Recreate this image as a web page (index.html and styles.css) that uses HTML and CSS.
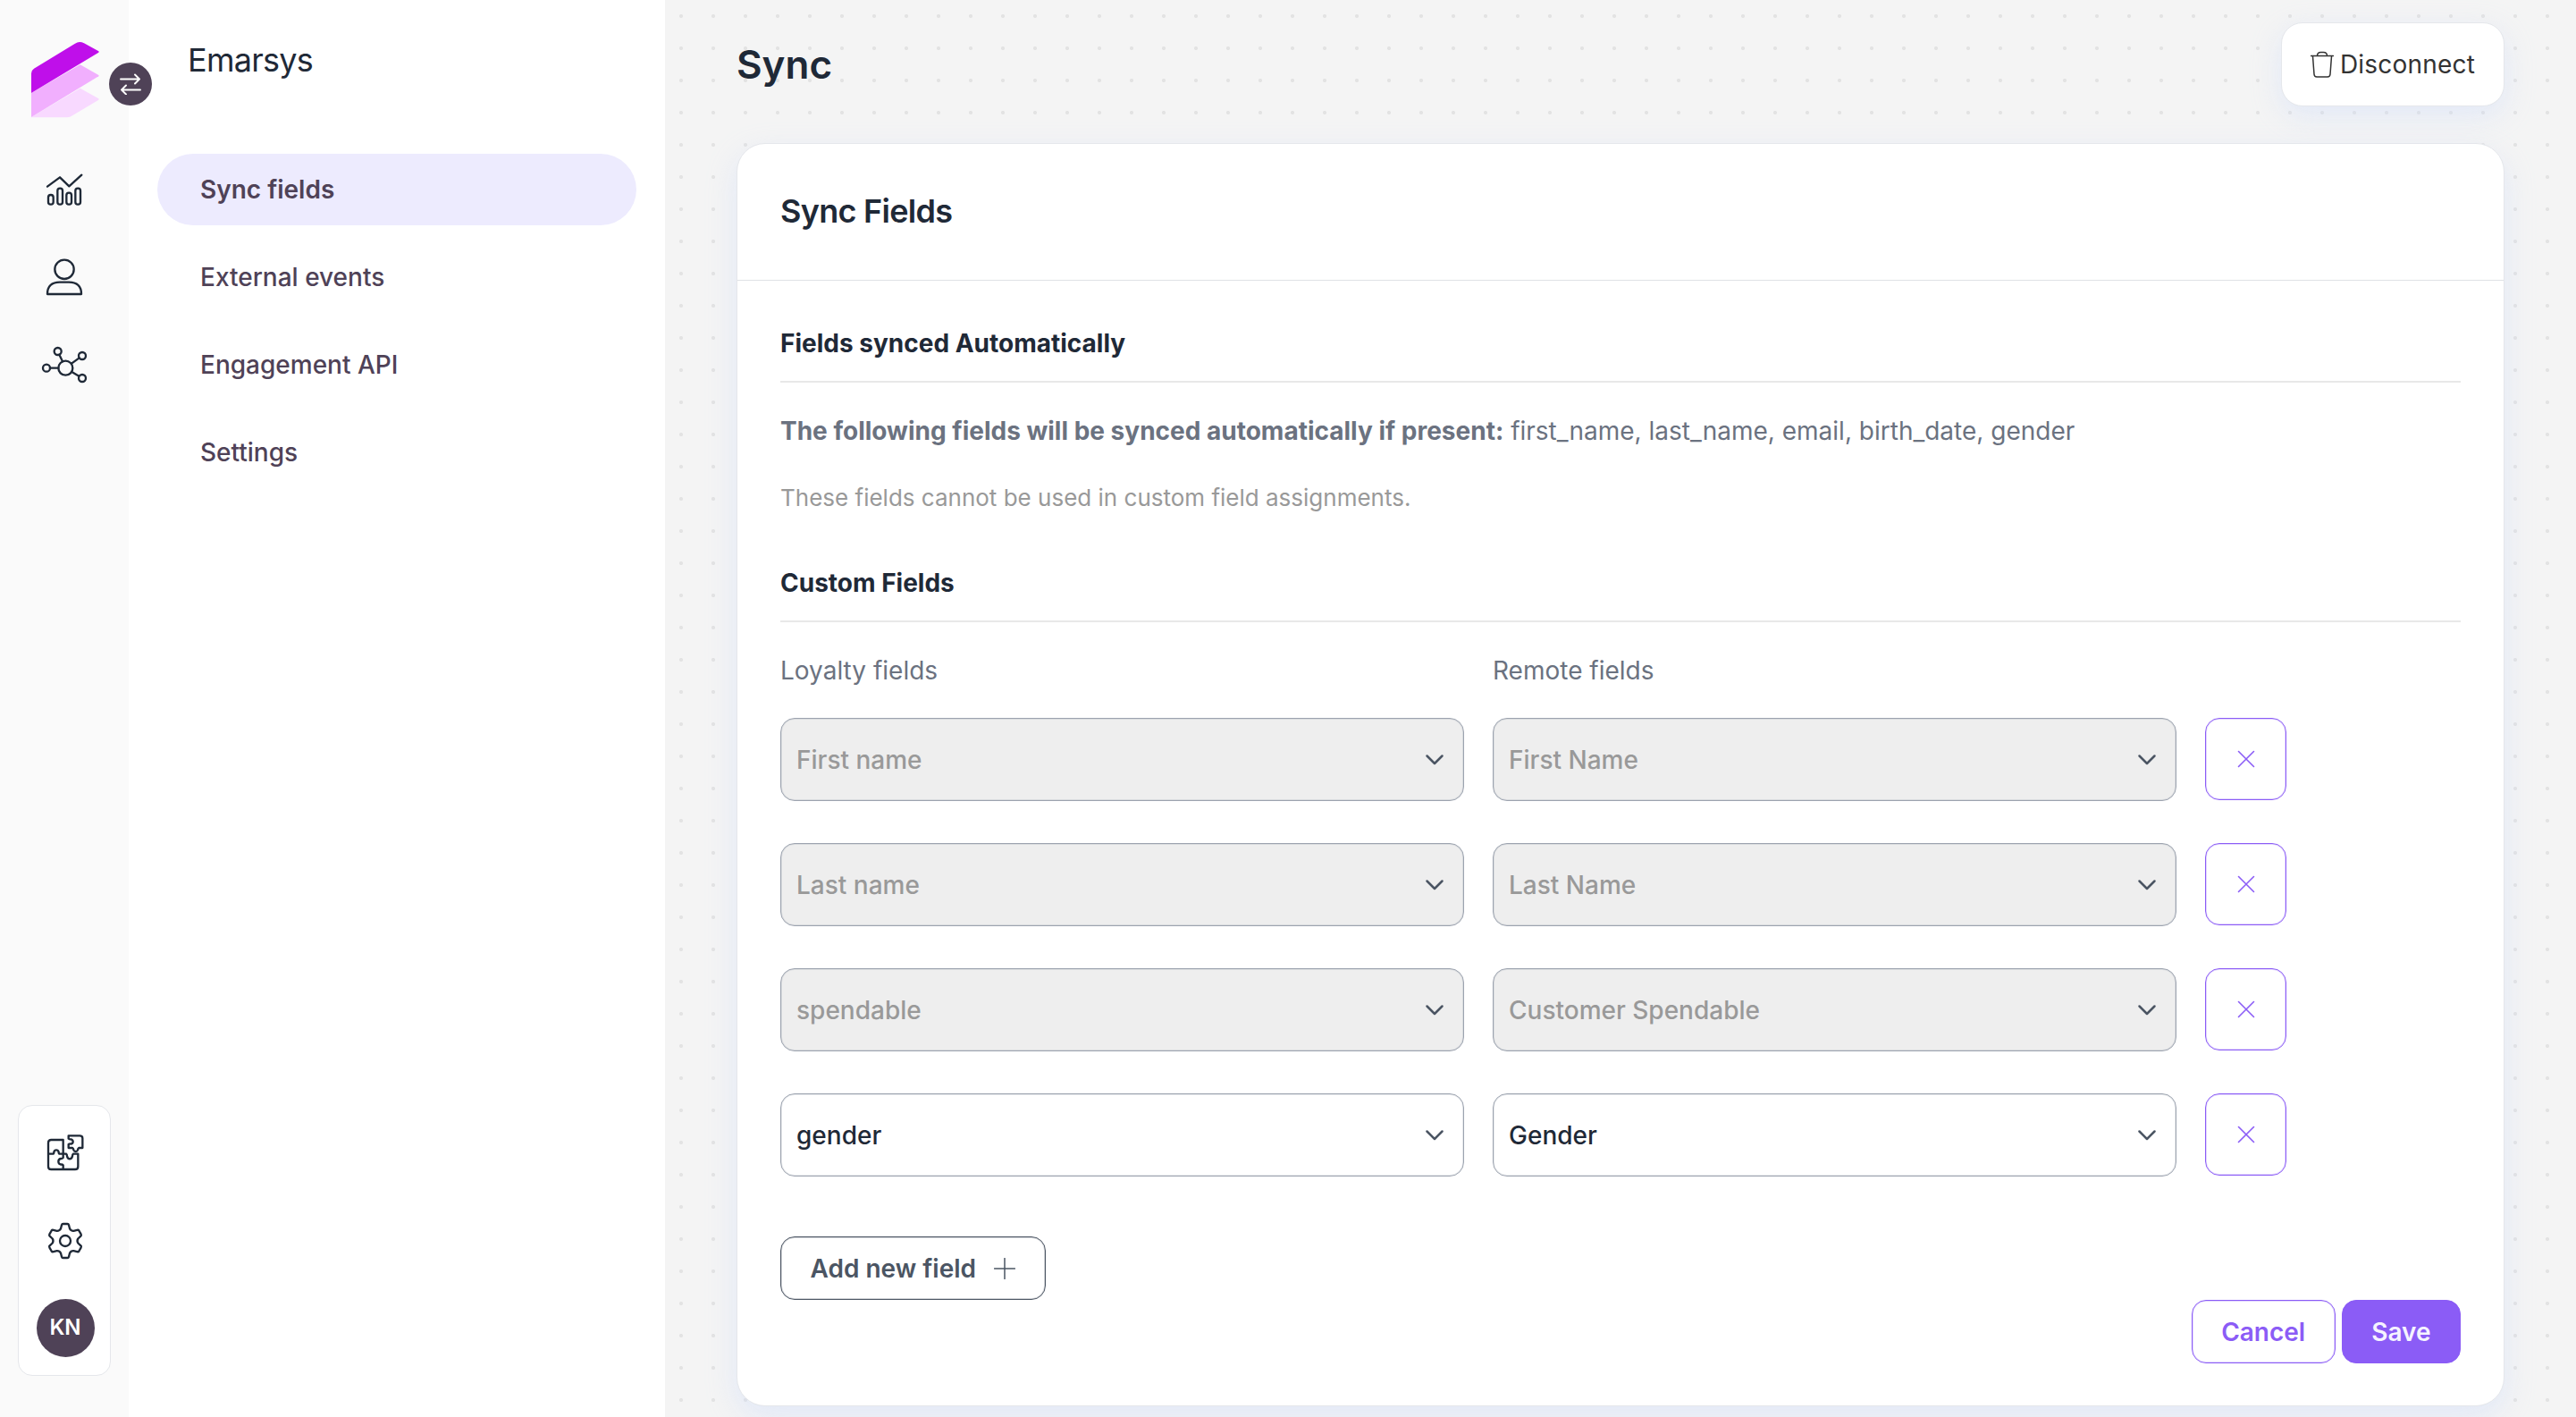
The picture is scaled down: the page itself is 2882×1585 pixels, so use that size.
FILE: index.html
```html
<!DOCTYPE html>
<html lang="en">
  <head>
    <meta charset="UTF-8" />
    <meta name="viewport" content="width=device-width, initial-scale=1.0" />
    <title>Emarsys - Sync</title>
    <link rel="stylesheet" href="styles.css">
  </head>

  <body>
    <svg class="sprite" aria-hidden="true">
      <symbol id="chevron" viewBox="0 0 24 24"><path d="M3.5 7.5 12 16l8.500-8.500" /></symbol>
      <symbol id="cross" viewBox="0 0 20 20"><path d="M1.500 1.500l17 17M18.500 1.500l-17 17" /></symbol>
    </svg>

    <div class="layout">
      <aside class="rail">
        <div class="brand">
          <svg class="logo" viewBox="105 138 228 258">
            <path fill="#f8d9ff" d="M269 296l62 35q2 2 0 4l-88 53q-8 6-17 6H105V393z" />
            <path fill="#f1affe" d="M269 217l62 35q2 2 0 4L105 393V312z" />
            <path fill="#bf0fea" d="M105 312V246q0-10 9-16L252 146q14-10 30-1l49 27q2 2 0 4z" />
          </svg>
          <button class="switch">
            <svg viewBox="0 0 24 24"><path d="M1 6.500h21M17 1.500l5 5-5 5M23 18.500H2M7 13.500l-5 5 5 5" /></svg>
          </button>
        </div>

        <nav class="rail-nav">
          <svg class="icon" viewBox="144 564 144 144">
            <path d="M159 626l42-31 31 30 42-38" />
            <rect x="162" y="654" width="17" height="32" rx="8" />
            <rect x="193" y="632" width="17" height="54" rx="8" />
            <rect x="223" y="647" width="17" height="39" rx="8" />
            <rect x="253" y="632" width="17" height="54" rx="8" />
          </svg>
          <svg class="icon" viewBox="144 855 144 144">
            <circle cx="216" cy="904" r="32" />
            <path d="M159 987q0-40 42-40h30q42 0 42 40z" />
          </svg>
          <svg class="icon big" viewBox="138 1146 156 156">
            <circle cx="220" cy="1235" r="24" />
            <circle cx="194" cy="1179" r="12" />
            <circle cx="276" cy="1194" r="12" />
            <circle cx="156" cy="1235" r="12" />
            <circle cx="276" cy="1269" r="12" />
            <path d="M199 1190l11 23M266 1201l-25 18M168 1235h28M265 1262l-24-14" />
          </svg>
        </nav>

        <div class="rail-bottom">
          <svg class="icon" viewBox="148 165 144 144">
            <path d="M213 293V280q-4-4-8-2-8-2-8-10t8-10q4 1 8-3V195H173q-10 0-10 10V284q0 10 10 10H253q10 0 10-10V242H247q-3 3-3 8-2 9-9 9t-9-9q0-5-3-8H200q-3-3-2-6-2-7-8-7t-8 7q1 3-2 6H163" />
            <path d="M231 181h38q9 0 9 9v32H266q-4 3-4 7-2 5-7 5t-7-5q0-4-4-7H231v-12q4-3 8-1 7-2 7-8t-7-8q-4 1-8-2z" />
          </svg>
          <svg class="icon" viewBox="-72 -72 144 144">
            <circle r="18" />
            <path d="M-15-41L-12-53q1-4 5-4H7q4 0 5 4L15-41Q19-33 28-33.500L40-36.500q4-1 6 2L53-22q2 4-1 6L43-7.500Q38 0 43 7.500L52 16q3 2 1 6L46 34.500q-2 3-6 2L28 33.500Q19 33 15 41L12 53q-1 4-5 4H-7q-4 0-5-4L-15 41Q-19 33-28 33.500L-40 36.500q-4 1-6-2L-53 22q-2-4 1-6L-43 7.500Q-38 0-43-7.500L-52-16q-3-2-1-6L-46-34.500q2-3 6-2L-28-33.500Q-19-33-15-41z" />
          </svg>
          <div class="avatar">KN</div>
        </div>
      </aside>

      <aside class="menu">
        <h2>Emarsys</h2>
        <ul>
          <li class="active">Sync fields</li>
          <li>External events</li>
          <li>Engagement API</li>
          <li>Settings</li>
        </ul>
      </aside>

      <main>
        <header>
          <h1>Sync</h1>
          <button class="disconnect">
            <svg viewBox="0 0 26 30"><path d="M.500 5.500h25M7.500 5.500q0-4 4-4h3q4 0 4 4M2.500 6l1.500 20q.200 3 3 3h12q2.800 0 3-3l1.500-20" /></svg>
            Disconnect
          </button>
        </header>

        <section class="card">
          <div class="card-head"><h2>Sync Fields</h2></div>
          <div class="card-body">
            <h3>Fields synced Automatically</h3>
            <p class="synced"><b>The following fields will be synced automatically if present:</b> first_name, last_name, email, birth_date, gender</p>
            <p class="note">These fields cannot be used in custom field assignments.</p>

            <h3>Custom Fields</h3>
            <div class="row labels">
              <span>Loyalty fields</span>
              <span>Remote fields</span>
            </div>
            <div class="row">
              <div class="select disabled">First name<svg><use href="#chevron" /></svg></div>
              <div class="select disabled">First Name<svg><use href="#chevron" /></svg></div>
              <button class="remove"><svg><use href="#cross" /></svg></button>
            </div>
            <div class="row">
              <div class="select disabled">Last name<svg><use href="#chevron" /></svg></div>
              <div class="select disabled">Last Name<svg><use href="#chevron" /></svg></div>
              <button class="remove"><svg><use href="#cross" /></svg></button>
            </div>
            <div class="row">
              <div class="select disabled">spendable<svg><use href="#chevron" /></svg></div>
              <div class="select disabled">Customer Spendable<svg><use href="#chevron" /></svg></div>
              <button class="remove"><svg><use href="#cross" /></svg></button>
            </div>
            <div class="row">
              <div class="select">gender<svg><use href="#chevron" /></svg></div>
              <div class="select">Gender<svg><use href="#chevron" /></svg></div>
              <button class="remove"><svg><use href="#cross" /></svg></button>
            </div>

            <button class="btn add">Add new field
              <svg viewBox="0 0 24 24"><path d="M12 .500v23M.500 12h23" /></svg>
            </button>
            <div class="actions">
              <button class="btn cancel">Cancel</button>
              <button class="btn save">Save</button>
            </div>
          </div>
        </section>
      </main>
    </div>
  </body>
</html>
```
FILE: styles.css
```css
* {
  box-sizing: border-box;
  margin: 0;
  padding: 0;
}

body {
  font-family: Inter, "Liberation Sans", sans-serif;
  font-size: 28px;
  line-height: 42px;
  color: #1f2937;
}

button {
  font: inherit;
  background: white;
  cursor: pointer;
}

svg {
  display: block;
  fill: none;
  stroke: currentColor;
  stroke-linecap: round;
  stroke-linejoin: round;
}

.sprite {
  position: absolute;
  width: 0;
  height: 0;
}

.layout {
  display: flex;
  height: 100vh;
  overflow: hidden;
}

/* icon rail */
.rail {
  display: flex;
  flex-direction: column;
  align-items: center;
  width: 144px;
  padding: 46px 0;
  background-color: #fafafa;
}

.brand {
  position: relative;
  width: 76px;
  margin-left: 2px;
}

.logo {
  width: 76px;
  height: 86px;
  stroke: none;
}

.switch {
  position: absolute;
  z-index: 1;
  left: 87px;
  top: 24px;
  display: flex;
  align-items: center;
  justify-content: center;
  width: 48px;
  height: 48px;
  border: none;
  border-radius: 50%;
  background-color: #4f4257;
  color: white;
}

.switch svg {
  width: 24px;
  height: 24px;
  stroke-width: 1.9;
}

.rail-nav {
  display: flex;
  flex-direction: column;
  align-items: center;
  gap: 49px;
  margin-top: 56px;
}

.icon {
  width: 48px;
  height: 48px;
  stroke-width: 7;
}

.icon.big {
  width: 52px;
  height: 52px;
}

.rail-bottom {
  display: flex;
  flex-direction: column;
  align-items: center;
  width: 104px;
  height: 303px;
  margin-top: auto;
  padding: 28px 0 0 2px;
  border: 1px solid #e5e7eb;
  border-radius: 16px;
  background-color: white;
}

.rail-bottom .icon + .icon {
  margin-top: 51px;
}

.avatar {
  width: 65px;
  height: 65px;
  margin-top: 41px;
  border-radius: 50%;
  background-color: #4f4257;
  color: white;
  font-size: 24px;
  font-weight: 600;
  line-height: 63px;
  text-align: center;
}

/* second level menu */
.menu {
  width: 600px;
  padding: 42px 32px;
  background-color: white;
}

.menu h2 {
  padding-left: 34px;
  font-size: 36px;
  font-weight: 400;
  line-height: 50px;
  letter-spacing: -0.02em;
}

.menu ul {
  display: flex;
  flex-direction: column;
  gap: 18px;
  margin-top: 80px;
  list-style: none;
}

.menu li {
  height: 80px;
  padding-left: 48px;
  border-radius: 40px;
  color: #4f4257;
  font-weight: 500;
  line-height: 81px;
}

.menu .active {
  background-color: #edebfe;
  font-weight: 600;
}

/* content */
main {
  flex: 1;
  padding: 25px 80px 0;
  background-color: #f4f4f4;
  background-image: radial-gradient(circle, #e3e3e3 1.8px, transparent 2.4px);
  background-size: 36px 36px;
}

header {
  display: flex;
  align-items: center;
  justify-content: space-between;
  margin-bottom: 41px;
}

h1 {
  font-size: 44px;
  font-weight: 600;
}

.disconnect {
  display: flex;
  align-items: center;
  gap: 7px;
  height: 94px;
  padding: 0 32px;
  border: 1px solid #e5e7eb;
  border-radius: 24px;
  box-shadow: 0 10px 32px rgba(200, 216, 252, 0.42);
  color: #333;
  letter-spacing: 0.2px;
}

.disconnect svg {
  width: 26px;
  height: 30px;
  stroke-width: 1.5;
}

.card {
  height: 1413px;
  border: 1px solid #e5e7eb;
  border-radius: 32px;
  background-color: white;
  box-shadow: 0 12px 32px rgba(200, 216, 252, 0.42);
}

.card-head {
  height: 153px;
  padding: 50px 48px;
  border-bottom: 1px solid #e0e2e6;
}

.card-head h2 {
  font-size: 36px;
  font-weight: 600;
  line-height: 50px;
  letter-spacing: -0.02em;
}

.card-body {
  padding: 49px 48px 48px;
}

h3 {
  padding-bottom: 21px;
  border-bottom: 2px solid #e8e8e8;
  font-size: 28px;
  font-weight: 700;
}

.synced {
  margin-top: 33px;
  color: #6b7280;
}

.note {
  margin: 33px 0 53px;
  color: #999;
  font-size: 26px;
}

.row {
  display: grid;
  grid-template-columns: 765px 765px 91px;
  gap: 32px;
  margin-bottom: 48px;
}

.labels {
  margin: 33px 0 32px;
  color: #6b7280;
}

.select {
  display: flex;
  align-items: center;
  justify-content: space-between;
  height: 93px;
  margin-bottom: -1px;
  padding: 1px 20px 0 17px;
  border: 1px solid #9ca3af;
  border-radius: 16px;
  box-shadow: inset 0 0 0 1px rgba(156, 163, 175, 0.25);
  font-weight: 500;
}

.select svg {
  width: 24px;
  height: 24px;
  color: #4b5563;
  stroke-width: 2.5;
}

.disabled {
  background-color: #eee;
  color: #999;
}

.remove {
  display: flex;
  align-items: center;
  justify-content: center;
  height: 92px;
  border: 1px solid #8b5cf6;
  border-radius: 16px;
  box-shadow: inset 0 0 0 1px rgba(139, 92, 246, 0.25);
  color: #8b5cf6;
}

.remove svg {
  width: 20px;
  height: 20px;
  stroke-width: 1.6;
}

.btn {
  height: 71px;
  padding: 0 32.5px;
  border: 1px solid #8b5cf6;
  border-radius: 16px;
  box-shadow: inset 0 0 0 1px rgba(139, 92, 246, 0.25);
  color: #8b5cf6;
  font-weight: 600;
}

.add {
  display: flex;
  align-items: center;
  gap: 20px;
  margin-top: 68px;
  border-color: #4b5563;
  box-shadow: inset 0 0 0 1px rgba(75, 85, 99, 0.25);
  color: #4b5563;
}

.add svg {
  width: 24px;
  height: 24px;
  stroke-width: 1.5;
}

.actions {
  display: flex;
  justify-content: flex-end;
  gap: 7px;
}

.save {
  background-color: #8b5cf6;
  color: #f5f3ff;
}
```
